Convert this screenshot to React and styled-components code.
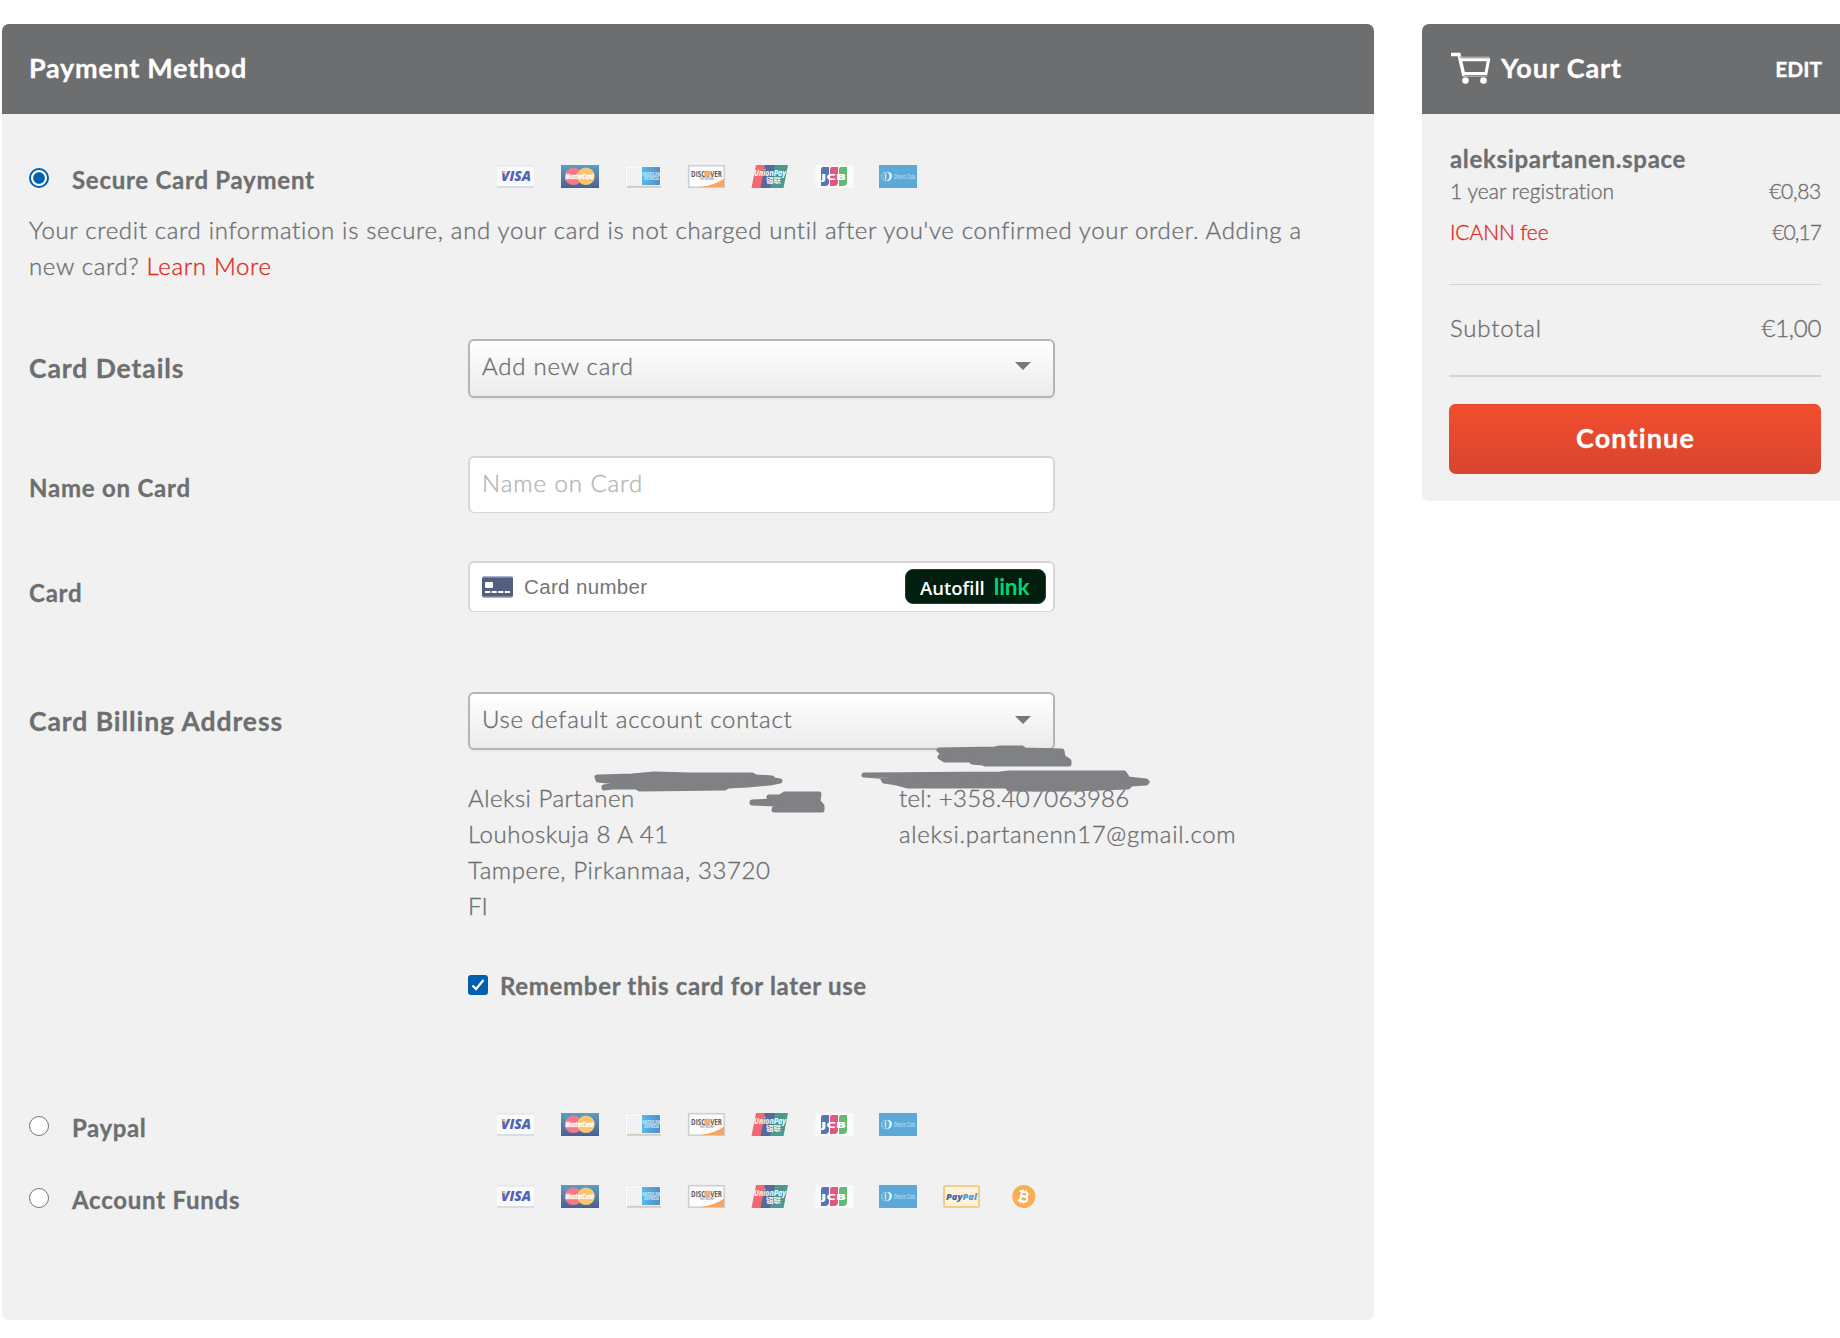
import React, { useState } from "react";
import styled, { createGlobalStyle } from "styled-components";

const Global = createGlobalStyle`
  *, *::before, *::after { box-sizing: border-box; }
  html, body { margin: 0; background: #fff; overflow: hidden; }
  body {
    font-family: Lato, "Open Sans", sans-serif;
    font-size: 24px;
    color: #6d6e70;
  }
`;

const light = `
  font-weight: 300;
  -webkit-text-stroke: 0.35px currentColor;
`;

const bold = `
  font-weight: 700;
  -webkit-text-stroke: 0.3px currentColor;
`;

const Page = styled.main`
  display: flex;
  align-items: flex-start;
  gap: 48px;
  width: 1840px;
  height: 1338px;
  padding: 24px 0 0 2px;
  overflow: hidden;
`;

const Panel = styled.section`
  flex: none;
  width: 1372px;
  height: 1296px;
  background: #f1f1f1;
  border-radius: 7px;
  overflow: hidden;
`;

const CartPanel = styled.aside`
  flex: none;
  width: 418px;
  height: 477px;
  background: #f1f1f1;
  border-radius: 7px 0 0 7px;
  overflow: hidden;
`;

const PanelHeader = styled.header`
  display: flex;
  align-items: center;
  height: 90px;
  padding: 0 18px 2px 27px;
  background: #6d6e70;
  color: #fff;
`;

const CartHeader = styled(PanelHeader)`
  padding-left: 29px;
`;

const Title = styled.h2`
  ${bold}
  margin: 0;
  font-size: 27px;
  line-height: 36px;
  letter-spacing: ${(p) => p.$track}px;
`;

const PanelBody = styled.div`
  padding: 51px 0 0 27px;
`;

const MethodRow = styled.label`
  display: grid;
  grid-template-columns: 43px 424px auto;
  align-items: start;
  height: 24px;
  margin-bottom: ${(p) => p.$after || 0}px;
`;

const MethodName = styled.span`
  ${bold}
  margin-top: 3px;
  line-height: 24px;
  letter-spacing: ${(p) => p.$track}px;
`;

const Radio = styled.input`
  appearance: none;
  width: 20px;
  height: 20px;
  margin: 3px 0 0 -0.5px;
  border: 1.5px solid #737373;
  border-radius: 50%;
  background: #fff;
  &:checked {
    border: 2px solid #005fae;
    background: radial-gradient(circle, #005fae 5.4px, #fff 6.2px);
  }
`;

const Logos = styled.span`
  display: flex;
  gap: 25.8px;
`;

const Logo = styled.svg`
  display: block;
  overflow: visible;
`;

const Notice = styled.p`
  ${light}
  width: 1310px;
  margin: 0 0 55px;
  line-height: 36px;
  letter-spacing: 0.67px;
`;

const RedLink = styled.a`
  color: #e0291b;
  text-decoration: none;
`;

const Field = styled.div`
  display: grid;
  grid-template-columns: 439px 587px;
  align-items: center;
  margin-bottom: ${(p) => p.$after}px;
`;

const FieldLabel = styled.span`
  ${bold}
  position: relative;
  top: ${(p) => p.$shift || 0}px;
  font-size: ${(p) => (p.$big ? 26.5 : 24)}px;
  line-height: 36px;
  letter-spacing: ${(p) => (p.$big ? 0.93 : 0.77)}px;
`;

const Select = styled.button`
  ${light}
  display: flex;
  align-items: center;
  justify-content: space-between;
  height: ${(p) => p.$h}px;
  padding: 0 22px ${(p) => p.$lift}px 12px;
  border: 2px solid #b5b5b5;
  border-radius: 6px;
  background: linear-gradient(#fff, #ebebeb);
  box-shadow: 0 2px 2px rgba(0, 0, 0, 0.04);
  color: inherit;
  font-family: inherit;
  font-size: 24px;
  letter-spacing: 0.77px;
`;

const Caret = styled.span`
  width: 0;
  height: 0;
  margin-top: 2px;
  border: 8px solid transparent;
  border-top-color: #77787a;
  border-bottom: 0;
`;

const TextInput = styled.input`
  ${light}
  height: 57px;
  padding: 0 12px 5px;
  border: 2px solid #d6d6d6;
  border-bottom-width: 1px;
  border-radius: 6px;
  background: #fff;
  color: #6d6e70;
  font-family: inherit;
  font-size: 24px;
  letter-spacing: 0.95px;
  outline: none;
  &::placeholder { color: #b4b4b4; }
`;

const CardInput = styled.div`
  display: flex;
  align-items: center;
  height: 51px;
  padding: 0 7px 1px 12px;
  border: 2px solid #d6d6d6;
  border-bottom-width: 1px;
  border-radius: 6px;
  background: #fff;
`;

const CardNumber = styled.span`
  flex: 1;
  margin-left: 11px;
  font: 20.5px "Liberation Sans", sans-serif;
  letter-spacing: 0.35px;
  color: #757575;
`;

const Autofill = styled.button`
  display: flex;
  align-items: center;
  gap: 9px;
  width: 141px;
  height: 35px;
  padding: 1px 0 0 14px;
  border: 1px solid #04532c;
  border-radius: 8px;
  background: #011e0f;
  color: #fff;
  font: 600 18.5px "Open Sans", sans-serif;
  letter-spacing: 0;
`;

const LinkMark = styled.span`
  padding-bottom: 2px;
  color: #00d66f;
  font: 700 22.5px Lato, sans-serif;
  letter-spacing: -0.1px;
`;

const Billing = styled.div`
  position: relative;
  margin: 0 0 51px 439px;
`;

const Contact = styled.address`
  ${light}
  display: grid;
  grid-template-columns: 431px auto;
  font-style: normal;
  line-height: 36px;
`;

const Line = styled.div`
  letter-spacing: ${(p) => p.$track}px;
`;

const Scribbles = styled.svg`
  position: absolute;
  left: 122px;
  top: -40px;
`;

const Remember = styled.label`
  ${bold}
  display: flex;
  align-items: center;
  gap: 12px;
  height: 20px;
  margin: 0 0 118px 439px;
  letter-spacing: 0.68px;
  line-height: 20px;
`;

const RememberText = styled.span`
  padding-top: 2px;
`;

const Check = styled.span`
  display: grid;
  place-items: center;
  width: 20px;
  height: 20px;
  border-radius: 3px;
  background: #005fae;
`;

const EditLink = styled.a`
  ${bold}
  margin-left: auto;
  padding-top: 2px;
  font-size: 21px;
  line-height: 36px;
`;

const CartTitle = styled(Title)`
  margin-left: 10px;
`;

const CartBody = styled.div`
  padding: 29px 19px 0 27px;
`;

const Domain = styled.div`
  ${bold}
  padding-left: 1px;
  line-height: 31px;
  letter-spacing: 0.68px;
`;

const CartLine = styled.div`
  ${light}
  display: flex;
  justify-content: space-between;
  margin-top: ${(p) => p.$before || 0}px;
  padding-left: 1px;
  font-size: ${(p) => p.$size || 21}px;
  line-height: 34px;
`;

const Tracked = styled.span`
  letter-spacing: ${(p) => p.$track}px;
`;

const Rule = styled.hr`
  height: ${(p) => p.$h}px;
  margin: ${(p) => p.$before}px 0 0;
  border: 0;
  background: #d4d4d4;
`;

const Continue = styled.button`
  ${bold}
  width: 372px;
  height: 70px;
  margin-top: 27px;
  padding: 0 0 4px 1px;
  border: 0;
  border-radius: 7px;
  background: linear-gradient(#f24e2f, #d8452e);
  box-shadow: inset 0 1px #dd4a2f;
  color: #fff;
  font-family: inherit;
  font-size: 27px;
  letter-spacing: 1.15px;
`;

const art = {
  visa: (
    <>
      <rect x="1" width="37" height="23" fill="#fbfbfb" />
      <path d="M1 .8h37" stroke="#e3e8ed" strokeWidth="1.6" />
      <path d="M1 22h37" stroke="#d8dde2" strokeWidth="2" />
      <text x="5" y="16.3" fontFamily="Open Sans" fontWeight="800" fontStyle="italic" fontSize="13.5" textLength="30" lengthAdjust="spacingAndGlyphs" fill="#4c62bd">VISA</text>
      <path d="M5 6.3h4l1.5 4.5z" fill="#f8c463" />
    </>
  ),
  mastercard: (
    <>
      <defs>
        <linearGradient id="mc" x2="0" y2="1">
          <stop stopColor="#5a9fc5" />
          <stop offset="1" stopColor="#4c5f94" />
        </linearGradient>
      </defs>
      <rect x="1" width="38" height="23" fill="url(#mc)" />
      <circle cx="13.5" cy="11.3" r="8.8" fill="#f5788a" />
      <circle cx="26" cy="11.3" r="8.8" fill="#f9c66f" />
      <text x="5.5" y="14.2" fontFamily="Open Sans" fontWeight="700" fontStyle="italic" fontSize="7.5" textLength="28" lengthAdjust="spacingAndGlyphs" fill="#fff" stroke="#fff" strokeWidth=".4">MasterCard</text>
    </>
  ),
  amex: (
    <>
      <defs>
        <linearGradient id="ax" x2="1">
          <stop stopColor="#59b9e6" />
          <stop offset="1" stopColor="#4d8fcf" />
        </linearGradient>
      </defs>
      <rect x="1" width="37" height="23" fill="#e8edf2" />
      <rect x="2.5" y="2" width="34" height="19" fill="#f2f2f2" stroke="#fff" />
      <path d="M3 21.8h34" stroke="#d6cbbb" strokeWidth="2" />
      <rect x="18" y="2" width="18" height="18" fill="url(#ax)" />
      <text fontFamily="Open Sans" fontWeight="700" fontSize="4.5" fill="#d1ecfa">
        <tspan x="18" y="10.5" textLength="18" lengthAdjust="spacingAndGlyphs">AMERICAN</tspan>
        <tspan x="20" y="14.8" textLength="15" lengthAdjust="spacingAndGlyphs">EXPRESS</tspan>
      </text>
    </>
  ),
  discover: (
    <>
      <rect x="1.7" y=".7" width="35.6" height="21.6" fill="#fcfcfc" stroke="#cfcfcf" strokeWidth="1.6" />
      <path d="M37 13.5V22H13Q29 20 37 13.5z" fill="#f8a563" />
      <text x="4" y="11.5" fontFamily="Open Sans" fontWeight="700" fontSize="8" textLength="31" lengthAdjust="spacingAndGlyphs" fill="#555b61">DISCOVER</text>
      <circle cx="20.4" cy="8.6" r="3.2" fill="#f8ad70" />
      <text x="13" y="14.7" fontFamily="Open Sans" fontSize="3.4" textLength="14" fill="#777">NETWORK</text>
    </>
  ),
  unionpay: (
    <>
      <path d="M5 0h12l-5 23H.5z" fill="#f56872" />
      <path d="M14 0h13l-5 23H9.5z" fill="#55699b" />
      <path d="M24 0h13l-4.5 23H19z" fill="#4d9992" />
      <text x="3" y="11" fontFamily="Open Sans" fontWeight="700" fontStyle="italic" fontSize="8" textLength="32" lengthAdjust="spacingAndGlyphs" fill="#fff">UnionPay</text>
      <text x="15" y="18" fontFamily="Noto Sans CJK SC, sans-serif" fontWeight="700" fontSize="7" textLength="15" lengthAdjust="spacingAndGlyphs" fill="#eef6f5">银联</text>
    </>
  ),
  jcb: (
    <>
      <rect x=".5" width="38" height="23" fill="#fafafa" />
      <path d="M8 2h6v15q0 4-4 4H6V5q0-3 2-3z" fill="#5873b6" />
      <path d="M17 2h6v15q0 4-4 4h-4V5q0-3 2-3z" fill="#e2577c" />
      <path d="M26 2h6v15q0 4-4 4h-4V5q0-3 2-3z" fill="#62ba74" />
      <text x="6" y="15" fontFamily="Open Sans" fontWeight="800" fontSize="9" textLength="25" lengthAdjust="spacingAndGlyphs" fill="#fff">JCB</text>
    </>
  ),
  diners: (
    <>
      <rect width="38" height="23" fill="#5ca8d6" />
      <circle cx="6.8" cy="11.5" r="4.2" fill="none" stroke="#a8d4ec" />
      <path d="M6.5 8.5v6" stroke="#d8edf8" strokeWidth="1.4" />
      <path d="M8.500 6.500q5 1 4.500 5t-5 5q2.500-2 2.500-5t-2-5z" fill="#e4f2fa" />
      <text x="15" y="14" fontFamily="Open Sans" fontWeight="700" fontSize="6.5" textLength="21" lengthAdjust="spacingAndGlyphs" fill="#aad5ec">Diners Club</text>
    </>
  ),
  paypal: (
    <>
      <rect x="1" y="1" width="35" height="21" rx="1.5" fill="#fdf2de" stroke="#f5cc85" strokeWidth="2" />
      <text x="3" y="14.8" fontFamily="Open Sans" fontWeight="800" fontStyle="italic" fontSize="9.5" textLength="31" lengthAdjust="spacingAndGlyphs" fill="#48679b">
        Pay<tspan fill="#559cc7">Pal</tspan>
      </text>
    </>
  ),
  bitcoin: (
    <>
      <path d="M0 .5h36M0 22.5h36" stroke="#f4efea" />
      <circle cx="17.8" cy="11.5" r="11.5" fill="#f9ad55" />
      <g transform="rotate(12 17.5 11.5)" fill="none" stroke="#fff" strokeWidth="2">
        <path d="M12.5 6.800h6.200a2.200 2.200 0 0 1 0 4.500h-3.700h4.200a2.500 2.500 0 0 1 0 5h-6.700M15 6.800v9.400" />
        <path d="M15.8 4.500v2.200M18.600 4.500v2.200M15.800 16.400v2.200M18.600 16.400v2.200" strokeWidth="1.4" />
      </g>
    </>
  ),
};

const cards = ["visa", "mastercard", "amex", "discover", "unionpay", "jcb", "diners"];

function LogoStrip({ names }) {
  return (
    <Logos>
      {names.map((name) => (
        <Logo key={name} width="38" height="23" viewBox="0 0 38 23" aria-label={name}>
          {art[name]}
        </Logo>
      ))}
    </Logos>
  );
}

function CardIcon() {
  return (
    <svg width="31" height="22" viewBox="0 0 31 22">
      <rect width="31" height="22" rx="2" fill="#aab1c6" />
      <rect y="1.5" width="31" height="19" rx="1" fill="#525f7f" />
      <rect x="3" y="6" width="8" height="6" rx="1" fill="#fff" />
      <path d="M3 16h25" stroke="#fff" strokeWidth="2.2" strokeDasharray="5.2 1.4" />
    </svg>
  );
}

function CartIcon() {
  return (
    <svg width="40" height="32" viewBox="0 0 40 32" fill="none" stroke="#fff">
      <path d="M0 2.500h8l5 21.500" strokeWidth="3.4" />
      <path d="M9.500 7.800H37.500L35 21.500H13" strokeWidth="3" />
      <path d="M8.500 5.300h30M12 24.300h24" stroke="#a9a9aa" strokeWidth="1.5" />
      <circle cx="14.500" cy="28.500" r="3.300" fill="#fff" stroke="none" />
      <circle cx="32.500" cy="28.500" r="3.300" fill="#fff" stroke="none" />
    </svg>
  );
}

const strokes = [
  "M939 750L995 749 1000 748 1022 748 1025 750 1062 751 1063 757 1069 761 1069 764 985 764 983 763 972 762 971 760 945 760 940 757 943 753z",
  "M864 775L1000 774 1010 773 1124 773 1128 779 1146 781 1147 782 1146 783 1131 784 1128 787 1072 789 1009 789 1007 786 908 786 897 783 884 781 883 779 890 777z",
  "M769 797L780 797 785 794 819 794 818 801 822 806 822 810 774 810 775 807 778 804 752 803 752 802 772 801z",
  "M597 777L600 777 632 776 654 774 690 775 752 775 756 777 772 778 774 780 780 781 780 781 770 783 748 785 728 786 725 788 640 789 636 787 612 787 604 788 604 787 614 785 616 782 598 780z",
];

export default function App() {
  const [method, setMethod] = useState("card");
  const radio = (value) => (
    <Radio type="radio" name="method" checked={method === value} onChange={() => setMethod(value)} />
  );

  return (
    <>
      <Global />
      <Page>
        <Panel>
          <PanelHeader>
            <Title $track={0.72}>Payment Method</Title>
          </PanelHeader>
          <PanelBody>
            <MethodRow $after={23}>
              {radio("card")}
              <MethodName $track={0.74}>Secure Card Payment</MethodName>
              <LogoStrip names={cards} />
            </MethodRow>
            <Notice>
              Your credit card information is secure, and your card is not charged until after you've
              confirmed your order. Adding a<br />
              new card? <RedLink>Learn More</RedLink>
            </Notice>

            <Field $after={58}>
              <FieldLabel $big $shift={-1}>Card Details</FieldLabel>
              <Select $h={59} $lift={7}>Add new card<Caret /></Select>
            </Field>
            <Field $after={48}>
              <FieldLabel $shift={3}>Name on Card</FieldLabel>
              <TextInput placeholder="Name on Card" />
            </Field>
            <Field $after={80}>
              <FieldLabel $shift={6}>Card</FieldLabel>
              <CardInput>
                <CardIcon />
                <CardNumber>Card number</CardNumber>
                <Autofill>Autofill<LinkMark>link</LinkMark></Autofill>
              </CardInput>
            </Field>
            <Field $after={30}>
              <FieldLabel $big>Card Billing Address</FieldLabel>
              <Select $h={58} $lift={5}>Use default account contact<Caret /></Select>
            </Field>

            <Billing>
              <Contact>
                <div>
                  <Line $track={0.5}>Aleksi Partanen</Line>
                  <Line $track={0.55}>Louhoskuja 8 A 41</Line>
                  <Line $track={0.6}>Tampere, Pirkanmaa, 33720</Line>
                  <Line $track={0}>FI</Line>
                </div>
                <div>
                  <Line $track={0.3}>tel: +358.407063986</Line>
                  <Line $track={0.68}>aleksi.partanenn17@gmail.com</Line>
                </div>
              </Contact>
              <Scribbles width="565" height="90" viewBox="590 740 565 90">
                {strokes.map((d) => (
                  <path key={d} d={d} fill="#808184" stroke="#808184" strokeWidth="5" strokeLinejoin="round" />
                ))}
              </Scribbles>
            </Billing>

            <Remember>
              <Check>
                <svg width="14" height="14" viewBox="0 0 14 14" fill="none" stroke="#fff" strokeWidth="2.2">
                  <path d="M1.500 7.500L5 11 12.500 2" />
                </svg>
              </Check>
              <RememberText>Remember this card for later use</RememberText>
            </Remember>

            <MethodRow $after={48}>
              {radio("paypal")}
              <MethodName $track={0.6}>Paypal</MethodName>
              <LogoStrip names={cards} />
            </MethodRow>
            <MethodRow>
              {radio("funds")}
              <MethodName $track={0.75}>Account Funds</MethodName>
              <LogoStrip names={[...cards, "paypal", "bitcoin"]} />
            </MethodRow>
          </PanelBody>
        </Panel>

        <CartPanel>
          <CartHeader>
            <CartIcon />
            <CartTitle $track={0.9}>Your Cart</CartTitle>
            <EditLink>EDIT</EditLink>
          </CartHeader>
          <CartBody>
            <Domain>aleksipartanen.space</Domain>
            <CartLine>
              <Tracked $track={0.05}>1 year registration</Tracked>
              <Tracked $track={-0.3}>€0,83</Tracked>
            </CartLine>
            <CartLine $before={7}>
              <Tracked as={RedLink} $track={-0.1}>ICANN fee</Tracked>
              <Tracked $track={-0.9}>€0,17</Tracked>
            </CartLine>
            <Rule $h={1} $before={35} />
            <CartLine $size={24} $before={26}>
              <Tracked $track={0.8}>Subtotal</Tracked>
              <Tracked $track={-0.3}>€1,00</Tracked>
            </CartLine>
            <Rule $h={2} $before={30} />
            <Continue>Continue</Continue>
          </CartBody>
        </CartPanel>
      </Page>
    </>
  );
}
